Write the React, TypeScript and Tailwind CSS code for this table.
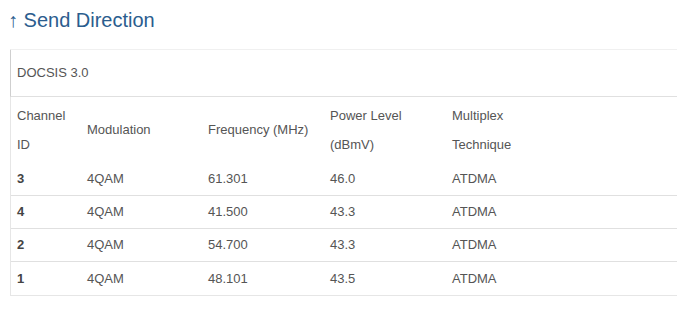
const rows = [
  { id: '3', mod: '4QAM', freq: '61.301', power: '46.0', mux: 'ATDMA' },
  { id: '4', mod: '4QAM', freq: '41.500', power: '43.3', mux: 'ATDMA' },
  { id: '2', mod: '4QAM', freq: '54.700', power: '43.3', mux: 'ATDMA' },
  { id: '1', mod: '4QAM', freq: '48.101', power: '43.5', mux: 'ATDMA' },
];

export default function App() {
  return (
    <div className="w-[677px] h-[327px] overflow-hidden bg-white font-['Liberation_Sans',Arial,sans-serif]">
      <h2 className="h-[40px] pl-[8px] pt-[6px] text-[20px] leading-[29px] text-[#2b5d8e]">
        ↑ Send Direction
      </h2>

      <div className="ml-[10px] mt-[9px] w-[720px] border-l border-t border-b border-[#e6e6e6] border-t-[#f0f0f0]">
        <div className="h-[47px] flex items-center pl-[6px] border-l border-[#cfcfcf] -ml-px text-[13px] text-[#555] border-b border-b-[#e0e0e0]">
          DOCSIS 3.0
        </div>

        <table className="w-full table-fixed border-collapse text-[13px] text-[#555]">
          <thead>
            <tr className="h-[65px]">
              <th className="w-[76px] pl-[6px] text-left font-normal leading-[29px] align-middle">Channel<br />ID</th>
              <th className="w-[121px] text-left font-normal leading-[29px] align-middle">Modulation</th>
              <th className="w-[122px] text-left font-normal leading-[29px] align-middle">Frequency (MHz)</th>
              <th className="w-[122px] text-left font-normal leading-[29px] align-middle">Power Level<br />(dBmV)</th>
              <th className="text-left font-normal leading-[29px] align-middle">Multiplex<br />Technique</th>
            </tr>
          </thead>
          <tbody>
            {rows.map((r, i) => (
              <tr
                key={i}
                className={i < rows.length - 1 ? 'h-[33px] border-b border-[#e0e0e0]' : 'h-[34px]'}
              >
                <td className="pl-[6px] font-bold text-[#444]">{r.id}</td>
                <td>{r.mod}</td>
                <td>{r.freq}</td>
                <td>{r.power}</td>
                <td>{r.mux}</td>
              </tr>
            ))}
          </tbody>
        </table>
      </div>
    </div>
  );
}
